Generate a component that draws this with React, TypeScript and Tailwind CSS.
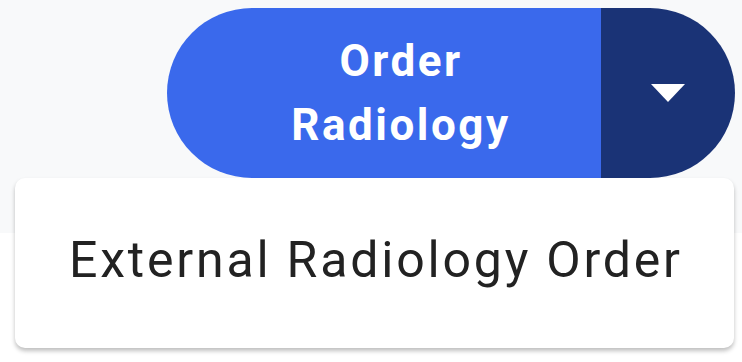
import React from "react";

export default function App() {
  return (
    <div className="relative w-[742px] h-[362px] bg-white overflow-hidden" style={{ fontFamily: "Roboto, 'Noto Sans', sans-serif" }}>
      <div className="h-[233px] bg-[#f8f9fa]" />
      <div className="absolute left-[15px] top-[8px] w-[720px] flex flex-col items-end">
        <div className="flex h-[170px] w-[568px] rounded-full overflow-hidden">
          <button className="flex-1 pl-[34px] bg-[#3a69ec] text-white font-bold text-[44px] tracking-[2.5px] leading-[64px] flex items-center justify-center text-center">
            <span>Order<br />Radiology</span>
          </button>
          <button className="w-[134px] bg-[#1a3376] flex items-center justify-center">
            <svg width="34" height="18" viewBox="0 0 34 18">
              <polygon points="0,0 34,0 17,18" fill="white" />
            </svg>
          </button>
        </div>
        <div className="w-[719px] self-start h-[170px] bg-white rounded-[10px] shadow-[0_3px_4px_rgba(0,0,0,0.25)] flex items-center pl-[54px]">
          <span className="text-[50px] tracking-[2.8px] text-[#222222] leading-none -mt-[6px]">External Radiology Order</span>
        </div>
      </div>
    </div>
  );
}
